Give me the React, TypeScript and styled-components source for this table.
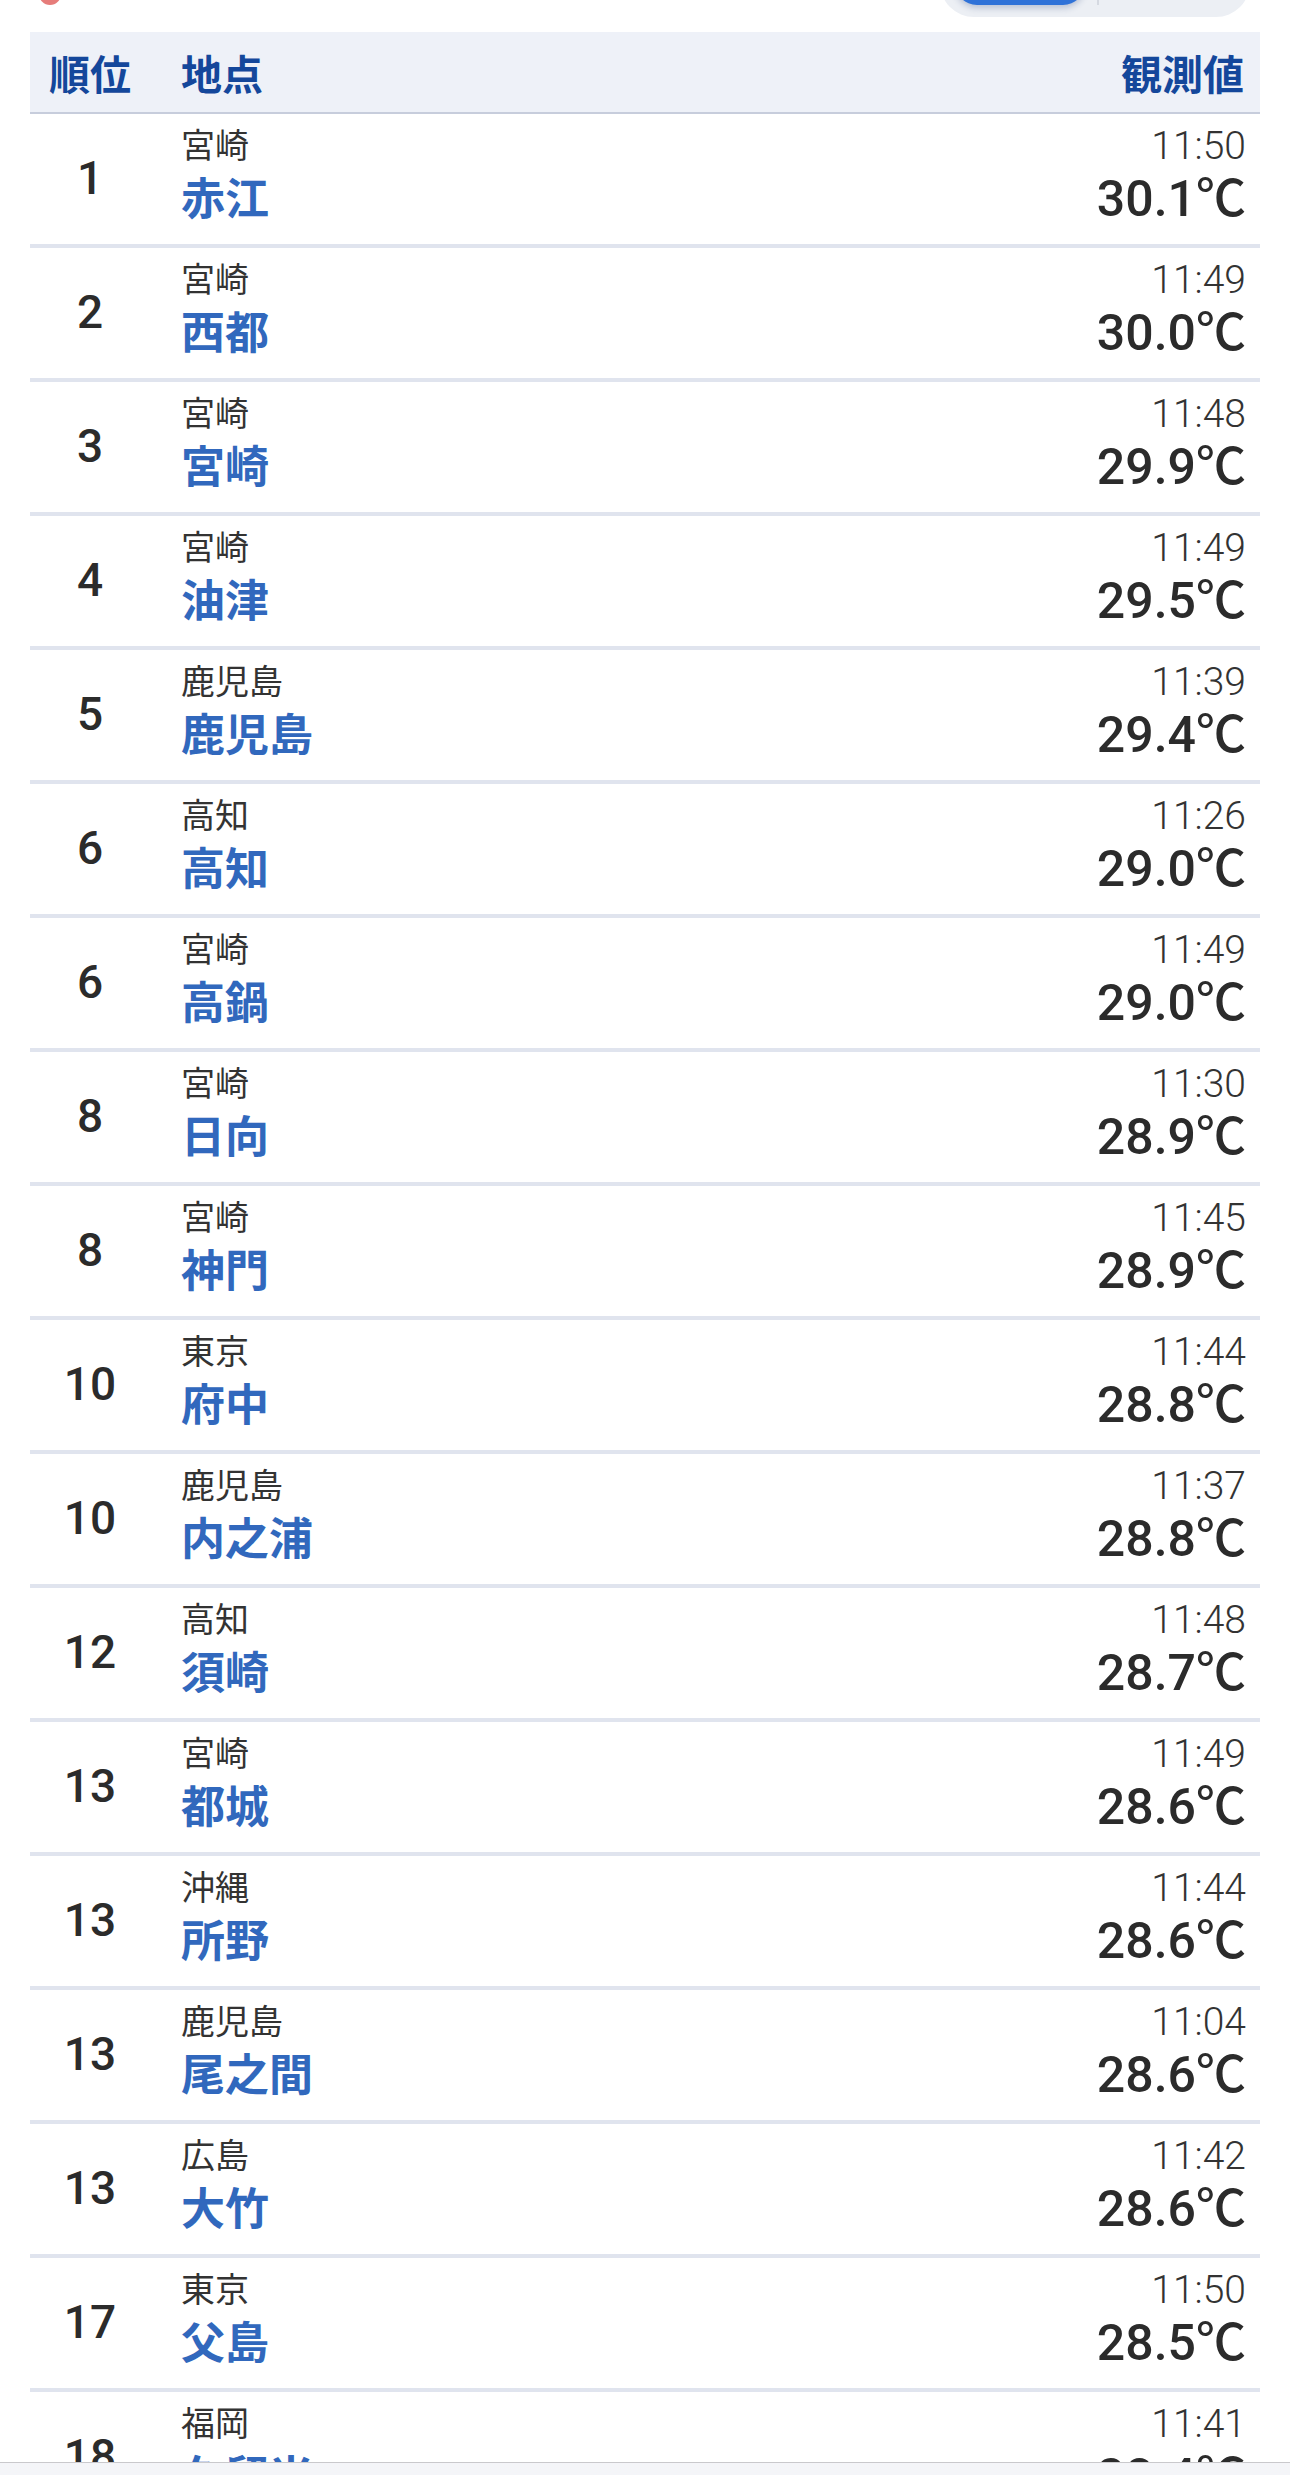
import React from "react";
import styled, { createGlobalStyle } from "styled-components";

const GlobalStyle = createGlobalStyle`
  html, body {
    margin: 0;
    padding: 0;
    background: #ffffff;
  }
  body {
    font-family: "Noto Sans CJK JP", "Noto Sans", sans-serif;
    color: #333333;
  }
`;

const Page = styled.div`
  width: 1290px;
  display: flex;
  flex-direction: column;
`;

const TopBar = styled.div`
  height: 20px;
  overflow: hidden;
  display: flex;
  align-items: flex-end;
  justify-content: space-between;
  padding: 0 40px 0 39px;
`;

const Dot = styled.div`
  width: 22px;
  height: 22px;
  border-radius: 50%;
  background: #e67c7a;
  margin-bottom: 15px;
`;

const Segmented = styled.div`
  width: 310px;
  height: 70px;
  margin-bottom: 3px;
  border-radius: 34px;
  background: #eceff4;
  display: flex;
  align-items: flex-end;
  padding: 0 0 12px 15px;
  box-sizing: border-box;
  gap: 12px;
`;

const SegActive = styled.div`
  width: 130px;
  height: 50px;
  border-radius: 22px;
  background: #2f72d8;
  box-shadow: 0 3px 6px rgba(30, 60, 120, 0.25);
`;

const SegDivider = styled.div`
  width: 2px;
  height: 40px;
  background: #d5d9e1;
`;

const Table = styled.div`
  margin: 12px 30px 0;
  display: flex;
  flex-direction: column;
`;

const HeaderRow = styled.div`
  height: 80px;
  background: #eef1f8;
  border-bottom: 2px solid #c7cddc;
  display: grid;
  grid-template-columns: 120px 1fr auto;
  align-items: center;
  padding-right: 16px;
  font-family: "Noto Sans CJK JP", sans-serif;
  font-weight: 700;
  font-size: 41px;
  color: #14479b;
`;

const HeadCell = styled.div<{ $align?: "center" | "left" | "right" }>`
  text-align: ${(p) => p.$align ?? "left"};
  padding-left: ${(p) => (p.$align === "left" ? "31px" : "0")};
  line-height: 50px;
`;

const Row = styled.div`
  height: 130px;
  border-bottom: 4px solid #e0e4ee;
  display: grid;
  grid-template-columns: 120px 1fr auto;
  align-items: start;
  padding-right: 14px;
`;

const Rank = styled.div`
  align-self: center;
  text-align: center;
  font-family: Roboto, "Liberation Sans", sans-serif;
  font-weight: 500;
  font-size: 46px;
  line-height: 54px;
  color: #2b2b2b;
  padding-bottom: 3px;
`;

const NameCell = styled.div`
  padding: 10px 0 0 31px;
  display: flex;
  flex-direction: column;
`;

const Pref = styled.div`
  font-family: "Noto Sans CJK JP", sans-serif;
  font-size: 34px;
  font-weight: 400;
  line-height: 40px;
  color: #333333;
`;

const Station = styled.div`
  font-family: "Noto Sans CJK JP", sans-serif;
  font-size: 44px;
  font-weight: 700;
  line-height: 64px;
  color: #3168bd;
`;

const ValueCell = styled.div`
  padding-top: 12px;
  display: flex;
  flex-direction: column;
  align-items: flex-end;
`;

const Time = styled.div`
  font-family: Roboto, "Liberation Sans", sans-serif;
  font-weight: 300;
  font-size: 39px;
  line-height: 40px;
  color: #333333;
`;

const Temp = styled.div`
  font-family: Roboto, "Liberation Sans", "Noto Sans CJK JP", sans-serif;
  font-weight: 500;
  font-size: 50px;
  line-height: 64px;
  color: #2b2b2b;
  margin-top: 1px;
`;

const BottomChrome = styled.div`
  position: fixed;
  left: 0;
  right: 0;
  bottom: 0;
  height: 12px;
  border-top: 1px solid #c9c9cc;
  background: #f4f5f8;
`;

type Obs = { rank: number; pref: string; name: string; time: string; temp: string };

const data: Obs[] = [
  { rank: 1, pref: "宮崎", name: "赤江", time: "11:50", temp: "30.1" },
  { rank: 2, pref: "宮崎", name: "西都", time: "11:49", temp: "30.0" },
  { rank: 3, pref: "宮崎", name: "宮崎", time: "11:48", temp: "29.9" },
  { rank: 4, pref: "宮崎", name: "油津", time: "11:49", temp: "29.5" },
  { rank: 5, pref: "鹿児島", name: "鹿児島", time: "11:39", temp: "29.4" },
  { rank: 6, pref: "高知", name: "高知", time: "11:26", temp: "29.0" },
  { rank: 6, pref: "宮崎", name: "高鍋", time: "11:49", temp: "29.0" },
  { rank: 8, pref: "宮崎", name: "日向", time: "11:30", temp: "28.9" },
  { rank: 8, pref: "宮崎", name: "神門", time: "11:45", temp: "28.9" },
  { rank: 10, pref: "東京", name: "府中", time: "11:44", temp: "28.8" },
  { rank: 10, pref: "鹿児島", name: "内之浦", time: "11:37", temp: "28.8" },
  { rank: 12, pref: "高知", name: "須崎", time: "11:48", temp: "28.7" },
  { rank: 13, pref: "宮崎", name: "都城", time: "11:49", temp: "28.6" },
  { rank: 13, pref: "沖縄", name: "所野", time: "11:44", temp: "28.6" },
  { rank: 13, pref: "鹿児島", name: "尾之間", time: "11:04", temp: "28.6" },
  { rank: 13, pref: "広島", name: "大竹", time: "11:42", temp: "28.6" },
  { rank: 17, pref: "東京", name: "父島", time: "11:50", temp: "28.5" },
  { rank: 18, pref: "福岡", name: "久留米", time: "11:41", temp: "28.4" },
];

export default function App() {
  return (
    <>
      <GlobalStyle />
      <Page>
        <TopBar>
          <Dot />
          <Segmented>
            <SegActive />
            <SegDivider />
          </Segmented>
        </TopBar>
        <Table>
          <HeaderRow>
            <HeadCell $align="center">順位</HeadCell>
            <HeadCell $align="left">地点</HeadCell>
            <HeadCell $align="right">観測値</HeadCell>
          </HeaderRow>
          {data.map((d, i) => (
            <Row key={i}>
              <Rank>{d.rank}</Rank>
              <NameCell>
                <Pref>{d.pref}</Pref>
                <Station>{d.name}</Station>
              </NameCell>
              <ValueCell>
                <Time>{d.time}</Time>
                <Temp>{d.temp}℃</Temp>
              </ValueCell>
            </Row>
          ))}
        </Table>
      </Page>
      <BottomChrome />
    </>
  );
}
